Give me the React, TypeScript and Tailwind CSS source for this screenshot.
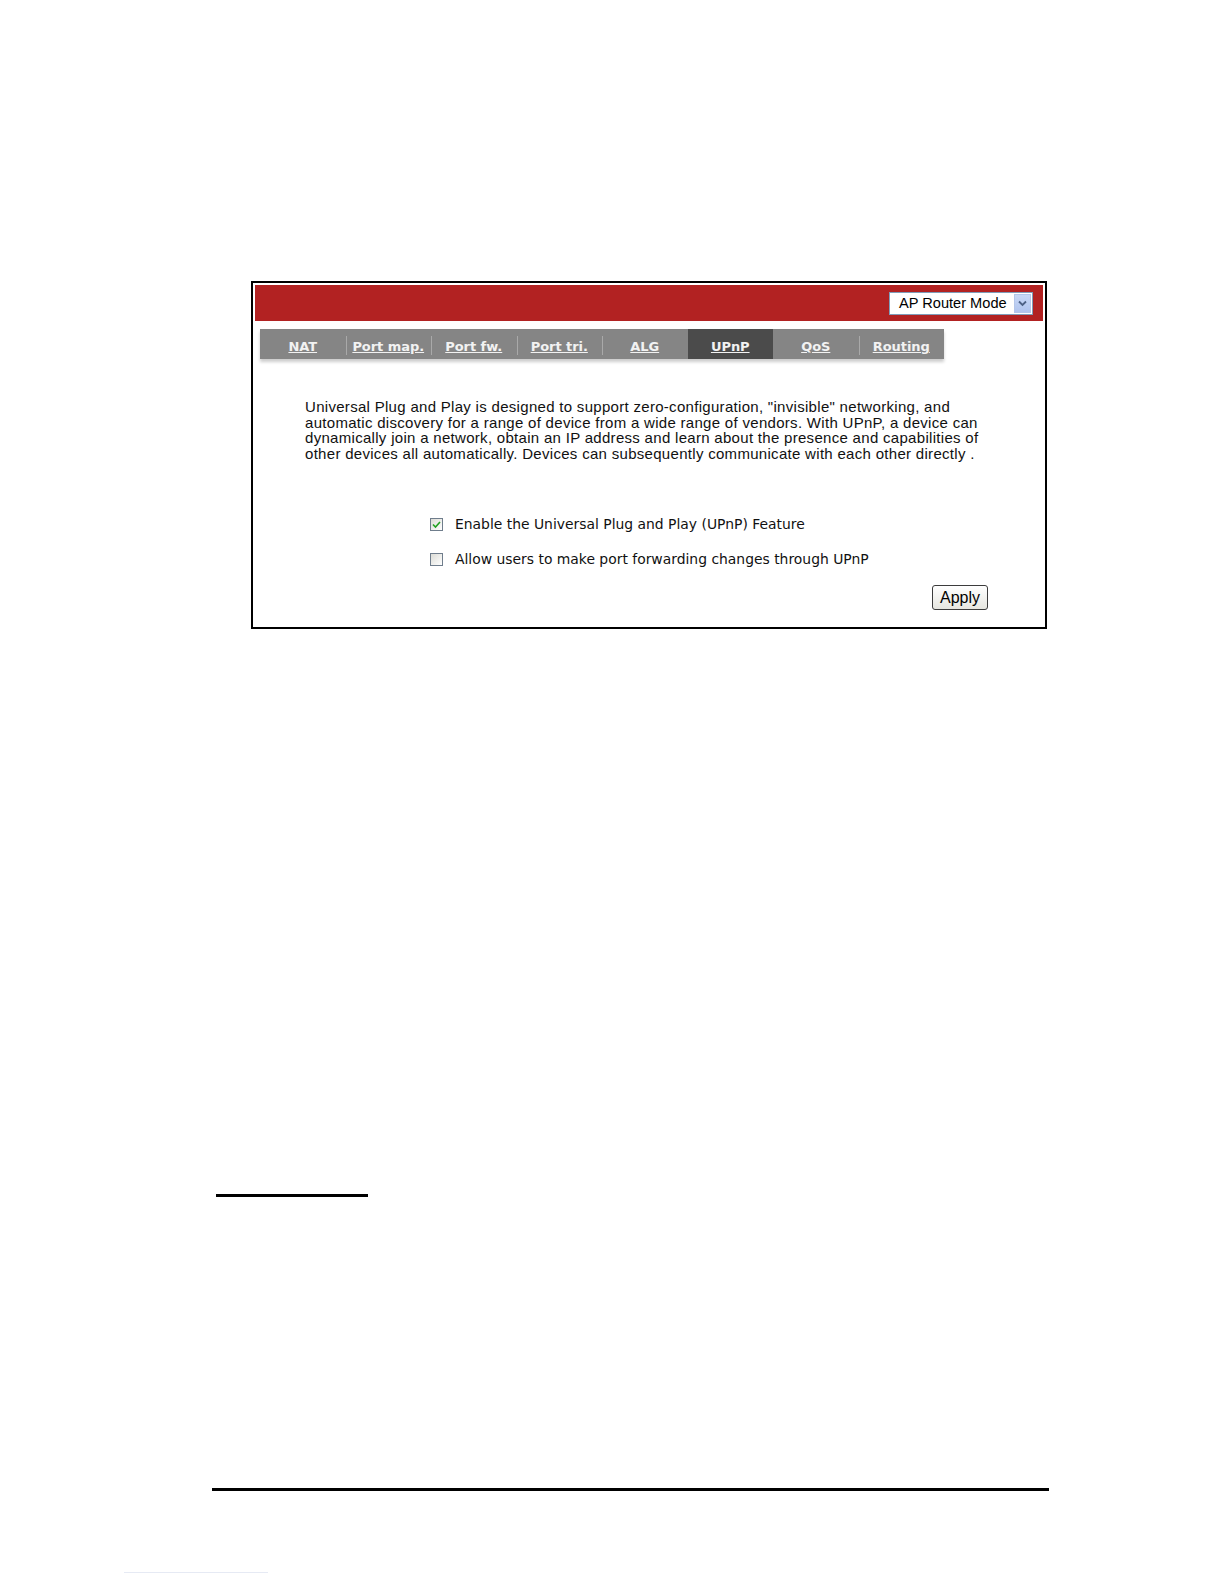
const TABS = ['NAT', 'Port map.', 'Port fw.', 'Port tri.', 'ALG', 'UPnP', 'QoS', 'Routing']
const ACTIVE = 'UPnP'

function CheckBox({ checked }: { checked: boolean }) {
  return (
    <span className="w-[13px] h-[13px] border border-[#6f7d8c] bg-gradient-to-br from-[#dcdcd6] to-white flex items-center justify-center shrink-0">
      {checked && (
        <svg width="9" height="9" viewBox="0 0 9 9">
          <path d="M1 4.5 L3.5 7 L8 2" fill="none" stroke="#21a121" strokeWidth="1.6" />
        </svg>
      )}
    </span>
  )
}

export default function App() {
  return (
    <div className="w-full h-[1584px] overflow-hidden bg-white" style={{ fontFamily: '"DejaVu Sans", Verdana, sans-serif' }}>
      <div className="pt-[281px] pl-[251px]">
        <div className="w-[796px] h-[348px] border-2 border-black p-[2px] flex flex-col">
          <div className="h-[36px] bg-[#b22222] flex items-center justify-end pr-[10px]">
            <div className="w-[144px] h-[23px] bg-white border border-[#7f9db9] flex items-center justify-between pl-[9px] pr-[1px]">
              <span className="text-[14.6px] text-black leading-none" style={{ fontFamily: '"Liberation Sans", Arial, sans-serif' }}>
                AP Router Mode
              </span>
              <span className="w-[17px] h-[19px] bg-gradient-to-b from-[#c8d8f6] to-[#b0c4ee] border border-[#b4c6ea] flex items-center justify-center">
                <svg width="9" height="7" viewBox="0 0 9 7">
                  <path d="M1 1.5 L4.5 5 L8 1.5" fill="none" stroke="#4d6185" strokeWidth="1.8" />
                </svg>
              </span>
            </div>
          </div>

          <div className="mt-[8px] ml-[5px] flex shadow-[0_3px_3px_rgba(0,0,0,0.2)] w-max">
            {TABS.map((t, i) => (
              <div
                key={t}
                className={`w-[85.5px] h-[30px] pt-[6px] flex items-center justify-center relative ${
                  t === ACTIVE ? 'bg-[#4b4b4b]' : 'bg-[#858585]'
                }`}
              >
                {i > 0 && t !== ACTIVE && TABS[i - 1] !== ACTIVE && (
                  <span className="absolute left-0 top-[7px] h-[19px] w-px bg-[#a9a9a9]" />
                )}
                <span className="text-[13px] font-bold underline text-[#f2f2f2] tracking-[-0.05px]">{t}</span>
              </div>
            ))}
          </div>

          <p
            className="mt-[40px] ml-[50px] text-[15px] leading-[15.5px] tracking-[0.3px] text-[#111] whitespace-nowrap"
            style={{ fontFamily: '"Liberation Sans", Arial, sans-serif' }}
          >
            Universal Plug and Play is designed to support zero-configuration, "invisible" networking, and
            <br />
            automatic discovery for a range of device from a wide range of vendors. With UPnP, a device can
            <br />
            dynamically join a network, obtain an IP address and learn about the presence and capabilities of
            <br />
            other devices all automatically. Devices can subsequently communicate with each other directly .
          </p>

          <div className="mt-[56px] ml-[175px] flex flex-col gap-[20px]">
            <label className="flex items-center gap-[12px] h-[15px]">
              <CheckBox checked />
              <span className="text-[13.9px] text-[#111]">Enable the Universal Plug and Play (UPnP) Feature</span>
            </label>
            <label className="flex items-center gap-[12px] h-[15px]">
              <CheckBox checked={false} />
              <span className="text-[13.9px] text-[#111]">Allow users to make port forwarding changes through UPnP</span>
            </label>
          </div>

          <div className="mt-[18px] flex justify-end pr-[55px]">
            <button
              className="w-[56px] h-[25px] border border-[#3c3c3c] rounded-[3px] bg-gradient-to-b from-white to-[#e6e6e0] text-[16px] text-black leading-none"
              style={{ fontFamily: '"Liberation Sans", Arial, sans-serif' }}
            >
              Apply
            </button>
          </div>
        </div>
      </div>

      <div className="mt-[565px] ml-[216px] w-[152px] h-[3px] bg-black" />
      <div className="mt-[291px] ml-[212px] w-[837px] h-[3px] bg-black" />
      <div className="mt-[81px] ml-[124px] w-[144px] h-px bg-[#e6eaf4]" />
    </div>
  )
}
